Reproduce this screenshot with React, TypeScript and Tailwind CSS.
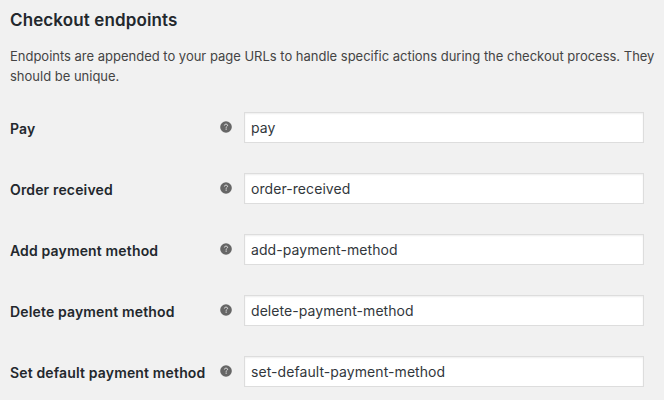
import { useState } from "react";

const FIELDS = [
  { id: "pay", label: "Pay", value: "pay" },
  { id: "order_received", label: "Order received", value: "order-received" },
  { id: "add_payment_method", label: "Add payment method", value: "add-payment-method" },
  { id: "delete_payment_method", label: "Delete payment method", value: "delete-payment-method" },
  { id: "set_default_payment_method", label: "Set default payment method", value: "set-default-payment-method" },
];

function HelpTip() {
  return (
    <svg className="w-3 h-3 mb-0.5 mr-3 shrink-0" viewBox="0 0 12 12" fill="none">
      <circle cx="6" cy="6" r="5.8" fill="#666666" />
      <path d="M4.4 4.5C4.4 3.6 5 3.2 6 3.2s1.6.4 1.6 1.2c0 1-1.5 1.1-1.5 2.3" stroke="#e4e4e4" strokeWidth="1" />
      <path d="M5.6 7.6h1.1v1.1H5.6z" fill="#e4e4e4" />
    </svg>
  );
}

function EndpointRow({ id, label, value }: { id: string; label: string; value: string }) {
  const [text, setText] = useState(value);

  return (
    <div className="flex items-center h-[31px]">
      <div className="flex items-center w-[234px] shrink-0">
        <label htmlFor={id} className="grow text-[14px] leading-[18px] tracking-[0.15px] font-semibold text-[#23282d] whitespace-nowrap pt-[3px]">
          {label}
        </label>
        <HelpTip />
      </div>
      <input
        id={id}
        type="text"
        value={text}
        onChange={(e) => setText(e.target.value)}
        className="w-[400px] h-[31px] px-1.5 border border-[#dddddd] bg-white text-[14px] tracking-[0.07px] text-[#32373c] shadow-[inset_0_1px_2px_rgba(0,0,0,0.07)] outline-none"
      />
    </div>
  );
}

export default function App() {
  return (
    <div className="h-[400px] overflow-hidden bg-[#f1f1f1] pl-2.5 pt-2 font-['Inter','Open_Sans',sans-serif]">
      <h2 className="text-[17px] leading-6 tracking-[0.12px] font-semibold text-[#23282d]">Checkout endpoints</h2>
      <p className="mt-3.5 w-[654px] text-[13px] leading-5 tracking-[-0.01px] text-[#444444]">
        Endpoints are appended to your page URLs to handle specific actions during the checkout process. They
        <br />
        should be unique.
      </p>
      <div className="mt-[26px] flex flex-col gap-[30px]">
        {FIELDS.map((field) => (
          <EndpointRow key={field.id} {...field} />
        ))}
      </div>
    </div>
  );
}
